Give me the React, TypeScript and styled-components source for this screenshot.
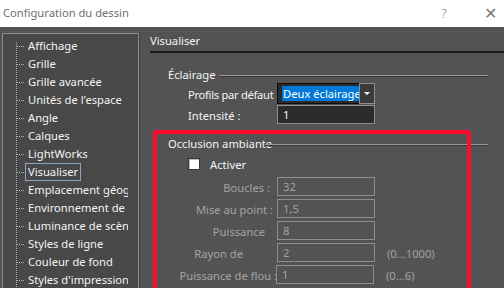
import React from "react";
import styled, { createGlobalStyle } from "styled-components";

const Global = createGlobalStyle`
  html, body { margin: 0; padding: 0; background: #535353; overflow: hidden; }
  body { font-family: "Noto Sans", "Open Sans", sans-serif; font-size: 11.2px; }
  * { box-sizing: border-box; }
`;

const Window = styled.div`
  width: 504px;
  height: 288px;
  display: flex;
  flex-direction: column;
  overflow: hidden;
  background: #535353;
`;

const TitleBar = styled.div`
  height: 27px;
  flex: none;
  background: #ffffff;
  display: flex;
  align-items: center;
  padding: 0 0 2px 3px;
  color: #6e6e6e;
  font-size: 11.2px;
`;

const TitleText = styled.span`
  flex: 1;
`;

const TitleButton = styled.span<{ $w: number; $gap: number }>`
  width: ${(p) => p.$w}px;
  margin-right: ${(p) => p.$gap}px;
  text-align: center;
  color: #7a7a7a;
  font-size: ${(p) => (p.$w > 24 ? 16 : 13)}px;
  font-weight: 300;
`;

const Main = styled.div`
  flex: 1;
  display: flex;
  padding-top: 6px;
  min-height: 0;
`;

const Tree = styled.div`
  width: 137px;
  margin-left: 2px;
  flex: none;
  background: #484848;
  border: 1px solid #8e8e8e;
  border-bottom: none;
  box-shadow: 1px 0 0 #3c3c3c;
  padding-top: 3px;
  overflow: hidden;
`;

const TreeClip = styled.div`
  width: 125px;
  overflow: hidden;
`;

const TreeList = styled.ul`
  list-style: none;
  margin: 0 0 0 13px;
  padding: 0;
  position: relative;
  &::before {
    content: "";
    position: absolute;
    left: 0;
    top: 5px;
    bottom: -20px;
    border-left: 1px dotted #b4b4b4;
  }
`;

const TreeItem = styled.li`
  height: 18px;
  display: flex;
  align-items: center;
  padding-left: 9px;
  position: relative;
  white-space: nowrap;
  &::before {
    content: "";
    position: absolute;
    left: 1px;
    width: 7px;
    top: 9px;
    border-top: 1px dotted #b4b4b4;
  }
`;

const TreeLabel = styled.span<{ $focus?: boolean }>`
  color: #f4f4f4;
  padding: 0 2px;
  height: 18px;
  line-height: 16px;
  border: 1px solid ${(p) => (p.$focus ? "#8fa2c4" : "transparent")};
`;

const Right = styled.div`
  flex: 1;
  padding-left: 11px;
  display: flex;
  flex-direction: column;
  position: relative;
`;

const Header = styled.div`
  color: #f4f4f4;
  height: 20px;
  line-height: 16px;
  border-bottom: 2px solid #1c1c1c;
`;

const Group = styled.div<{ $top: number }>`
  margin-top: ${(p) => p.$top}px;
  margin-left: 18px;
  margin-right: 16px;
  display: flex;
  flex-direction: column;
`;

const GroupTitle = styled.div`
  display: flex;
  align-items: center;
  height: 16px;
  color: #f4f4f4;
  white-space: nowrap;
`;

const GroupLine = styled.span<{ $overlap?: number }>`
  flex: 1;
  height: 2px;
  margin-left: ${(p) => (p.$overlap ? -p.$overlap : 3)}px;
  margin-top: ${(p) => (p.$overlap ? 3 : 4)}px;
  border-top: 1px solid #9a9a9a;
  border-bottom: 1px solid #3a3a3a;
`;

const Row = styled.div<{ $h: number; $mt?: number }>`
  display: flex;
  align-items: center;
  height: ${(p) => p.$h}px;
  margin-top: ${(p) => p.$mt ?? 0}px;
  padding-left: 20px;
`;

const Label = styled.span<{ $disabled?: boolean; $right?: number; $tight?: boolean }>`
  width: 89px;
  flex: none;
  display: flex;
  justify-content: ${(p) => (p.$right !== undefined ? "flex-end" : "flex-start")};
  white-space: nowrap;
  color: ${(p) => (p.$disabled ? "#a3a3a3" : "#f4f4f4")};
  letter-spacing: ${(p) => (p.$tight ? "-0.3px" : "normal")};
  padding-right: ${(p) => Math.max(p.$right ?? 0, 0)}px;
  margin-right: ${(p) => Math.min(p.$right ?? 0, 0)}px;
  position: relative;
  z-index: 0;
  padding-top: 1px;
`;

const Combo = styled.div`
  width: 98px;
  height: 21px;
  display: flex;
  position: relative;
  z-index: 1;
`;

const ComboField = styled.div`
  flex: 1;
  background: #2b2b2b;
  border: 1px solid #0a0a0a;
  border-right: none;
  padding: 2px 0 2px 4px;
  overflow: hidden;
  white-space: nowrap;
`;

const Selected = styled.span`
  display: inline-block;
  background: #0078d7;
  color: #ffffff;
  height: 15px;
  line-height: 15px;
  padding: 0 1px;
`;

const ComboButton = styled.div`
  width: 16px;
  border: 1px solid #8e8e8e;
  background: #3a3a3a;
  display: flex;
  align-items: center;
  justify-content: center;
  &::after {
    content: "";
    border-left: 3px solid transparent;
    border-right: 3px solid transparent;
    border-top: 3px solid #ffffff;
  }
`;

const Input = styled.div<{ $disabled?: boolean }>`
  width: 98px;
  height: 19px;
  flex: none;
  border: 1px solid #8e8e8e;
  background: ${(p) => (p.$disabled ? "#535353" : "#2b2b2b")};
  color: ${(p) => (p.$disabled ? "#a3a3a3" : "#f4f4f4")};
  padding-left: 5px;
  line-height: 17px;
  position: relative;
  z-index: 1;
`;

const Range = styled.span`
  color: #a3a3a3;
  margin-left: 12px;
  padding-top: 1px;
`;

const CheckRow = styled.label`
  display: flex;
  align-items: center;
  height: 16px;
  margin-top: 5px;
  padding-left: 20px;
  color: #f4f4f4;
  gap: 10px;
`;

const CheckBox = styled.span`
  width: 12px;
  height: 12px;
  background: #ffffff;
  border: 1px solid #3a3a3a;
  box-shadow: inset 1px 1px 0 #bdbdbd;
`;

const Fields = styled.div`
  display: flex;
  flex-direction: column;
  gap: 3px;
  margin-top: 5px;
`;

const Highlight = styled.div`
  position: absolute;
  left: 14px;
  top: 97px;
  width: 318px;
  height: 162px;
  border: 4px solid #ff0a2a;
  border-radius: 4px;
  pointer-events: none;
`;

const treeItems = [
  "Affichage",
  "Grille",
  "Grille avancée",
  "Unités de l'espace",
  "Angle",
  "Calques",
  "LightWorks",
  "Visualiser",
  "Emplacement géographique",
  "Environnement de scène",
  "Luminance de scène",
  "Styles de ligne",
  "Couleur de fond",
  "Styles d'impression",
];

const fields: { label: string; value: string; right: number; range?: string }[] = [
  { label: "Boucles :", value: "32", right: 7 },
  { label: "Mise au point :", value: "1,5", right: 4 },
  { label: "Puissance", value: "8", right: 12 },
  { label: "Rayon de", value: "2", right: 34, range: "(0...1000)" },
  { label: "Puissance de flou :", value: "1", right: -1, range: "(0...6)" },
];

export default function App() {
  return (
    <Window>
      <Global />
      <TitleBar>
        <TitleText>Configuration du dessin</TitleText>
        <TitleButton $w={20} $gap={22}>?</TitleButton>
        <TitleButton $w={28} $gap={0}>✕</TitleButton>
      </TitleBar>
      <Main>
        <Tree>
          <TreeClip>
            <TreeList>
              {treeItems.map((t) => (
                <TreeItem key={t}>
                  <TreeLabel $focus={t === "Visualiser"}>{t}</TreeLabel>
                </TreeItem>
              ))}
            </TreeList>
          </TreeClip>
        </Tree>
        <Right>
          <Header>Visualiser</Header>
          <Group $top={13}>
            <GroupTitle>
              Éclairage
              <GroupLine />
            </GroupTitle>
            <Row $h={21} $mt={1}>
              <Label $tight>Profils par défaut</Label>
              <Combo>
                <ComboField>
                  <Selected>Deux éclairages</Selected>
                </ComboField>
                <ComboButton />
              </Combo>
            </Row>
            <Row $h={19} $mt={1}>
              <Label>Intensité :</Label>
              <Input>1</Input>
            </Row>
          </Group>
          <Group $top={11}>
            <GroupTitle>
              Occlusion ambiante
              <GroupLine $overlap={7} />
            </GroupTitle>
            <CheckRow>
              <CheckBox />
              Activer
            </CheckRow>
            <Fields>
              {fields.map((f) => (
                <Row $h={19} key={f.label}>
                  <Label $disabled $right={f.right}>
                    {f.label}
                  </Label>
                  <Input $disabled>{f.value}</Input>
                  {f.range && <Range>{f.range}</Range>}
                </Row>
              ))}
            </Fields>
          </Group>
          <Highlight />
        </Right>
      </Main>
    </Window>
  );
}
